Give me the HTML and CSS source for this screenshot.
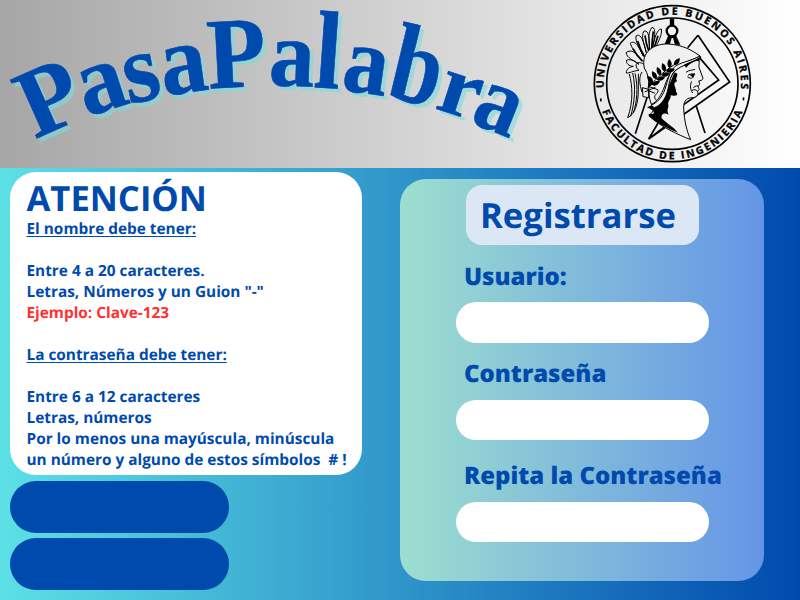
FILE: index.html
```html
<!DOCTYPE html>
<html lang="es">
<head>
<meta charset="utf-8">
<title>PasaPalabra</title>
<link rel="stylesheet" href="styles.css">
</head>
<body>
<header class="header">
  <svg class="title" viewBox="0 0 540 168" role="img" aria-label="PasaPalabra">
    <defs>
      <g id="word">
        <text transform="translate(62 127) rotate(-24)">P</text>
        <text transform="translate(109 110) rotate(-18) scale(.97 1)">a</text>
        <text transform="translate(146.500 100.500) rotate(-12) scale(.95 1)">s</text>
        <text transform="translate(187 92.500) rotate(-8) scale(.96 1.01)">a</text>
        <text transform="translate(238 87) rotate(-3) scale(.98 1.03)">P</text>
        <text transform="translate(291 86) rotate(2) scale(.93 .97)">a</text>
        <text transform="translate(326 88) rotate(4) scale(.96 1.130)">l</text>
        <text transform="translate(362.500 93) rotate(8) scale(.92 .98)">a</text>
        <text transform="translate(409.500 102) rotate(13.500) scale(.93 1.130)">b</text>
        <text transform="translate(453.500 114.500) rotate(18) scale(.95 .88)">r</text>
        <text transform="translate(489.500 130) rotate(22) scale(.91 .97)">a</text>
      </g>
    </defs>
    <use class="title-shadow" href="#word" x="4" y="4"/>
    <use class="title-face" href="#word"/>
  </svg>
  <svg class="seal" viewBox="21 9 480 480">
    <defs>
      <path id="arc-top" d="M56.500 265A206 206 0 1 1 467.500 265"/>
      <path id="arc-bottom" d="M51 333A226 226 0 0 0 473 333"/>
      <path id="leaf" d="M0 0C-9 -6 -9 -17 -3 -27C7 -19 9 -8 0 0Z"/>
    </defs>
    <g class="line">
      <circle cx="262" cy="251" r="234" stroke-width="5"/>
      <circle cx="262" cy="251" r="197" stroke-width="5"/>
      <path stroke-width="5" d="M339 106L434 246L191 417L221 366M339 106L308 143M341 170L401 240L296 314M191 417L247 374"/>
      <path stroke-width="5" d="M186 293L151 401M334 319L360 399"/>
      <circle cx="261" cy="93" r="16" stroke-width="7"/>
      <path stroke-width="13" d="M261 56V77"/>
    </g>
    <path d="M250 106L238 134H254L260 114H264L270 134H286L273 106Z"/>
    <g class="plume">
      <path d="M177 193C150 177 148 202 162 211C142 213 134 220 124 219C123 207 134 201 145 199C132 199 122 190 125 180C140 177 152 184 162 193C142 178 127 175 123 158C139 145 154 160 169 178C150 160 140 143 136 130C150 118 161 140 174 167C161 138 151 126 153 108C168 97 177 127 184 158C174 122 169 111 176 94C192 87 193 116 194 151C190 112 190 97 201 82C216 83 207 117 202 148C209 111 216 88 229 87C233 101 219 128 210 144"/>
      <path d="M133 222C142 256 146 304 128 353C151 343 160 306 160 271V221M143 219C153 262 149 308 137 349M150 220C160 265 156 304 145 339M171 216C160 234 164 253 171 276"/>
      <path stroke-width="5" d="M144 146C151 160 160 172 173 184M158 123C164 144 172 159 179 171M180 106C182 128 188 145 193 158M205 94C202 118 199 137 201 151M219 107L207 145"/>
    </g>
    <path class="skin" d="M178 204C167 156 207 130 250 132C291 134 322 151 345 168C330 177 309 184 287 194C259 207 248 231 239 258C229 285 217 306 199 313C183 274 202 241 178 204Z"/>
    <path class="skin" d="M297 192C306 184 322 178 338 174C346 181 341 191 342 202L354 235C353 241 346 242 341 243C345 251 345 257 338 259C345 267 342 272 337 273C343 283 334 294 320 293C300 295 296 308 296 324C298 367 306 394 317 419C278 404 224 378 193 348L213 321C239 305 239 278 249 251C259 225 272 205 297 192Z"/>
    <path d="M269 218C287 219 267 236 277 243C259 250 274 260 273 275C283 286 271 289 257 286C258 296 252 299 249 311C254 325 242 325 251 344C238 336 227 343 230 355C241 367 264 380 279 398C239 382 216 367 193 350C187 343 193 339 201 342C210 343 211 332 186 322C200 315 218 315 238 292L252 255C259 240 264 226 269 218Z"/>
    <path class="skin" d="M345 168C318 184 280 187 265 204C247 226 246 263 231 287C222 302 210 311 198 316L208 323C226 317 239 300 246 278C253 254 253 230 270 212C290 195 326 188 347 172Z"/>
    <path d="M297 194C316 185 333 181 349 169L341 184L336 182C325 184 314 190 303 203Z"/>
    <g>
      <use href="#leaf" transform="translate(203 250) rotate(-30)"/>
      <use href="#leaf" transform="translate(214 238) rotate(-22)"/>
      <use href="#leaf" transform="translate(226 226) rotate(-15)"/>
      <use href="#leaf" transform="translate(239 215) rotate(-8)"/>
      <use href="#leaf" transform="translate(254 204) rotate(2)"/>
      <use href="#leaf" transform="translate(267 195) rotate(45)"/>
      <use href="#leaf" transform="translate(200 254) rotate(75)"/>
      <use href="#leaf" transform="translate(215 239) rotate(78)"/>
      <use href="#leaf" transform="translate(229 226) rotate(82)"/>
      <use href="#leaf" transform="translate(243 213) rotate(86)"/>
      <path class="plume" d="M191 263C207 242 233 216 268 194"/>
      <path d="M187 266L193 239L205 250Z"/>
    </g>
    <g class="plume">
      <path d="M172 263L191 268V293L174 290ZM193 260L218 269C225 281 198 284 214 301M188 271L210 280M179 276L211 262"/>
      <path d="M328 222C324 233 322 240 307 230M325 263C332 257 337 257 340 258M321 271C328 267 334 270 336 273M320 244C315 254 315 268 323 279"/>
      <path d="M303 217C313 209 320 212 330 208M309 226C317 219 323 223 330 222"/>
    </g>
    <path d="M313 224L330 220L325 233Z"/>
    <text class="seal-text"><textPath href="#arc-top" startOffset="1" textLength="676">UNIVERSIDAD DE BUENOS AIRES</textPath></text>
    <text class="seal-text"><textPath href="#arc-bottom" startOffset="1" textLength="540">FACULTAD DE INGENIERIA</textPath></text>
    <path class="line" stroke-width="5" d="M47 295L48 304M476 292L475 301"/>
  </svg>
</header>
<main class="main">
  <section class="left">
    <article class="rules">
      <h1>ATENCIÓN</h1>
      <p><u>El nombre debe tener:</u></p>
      <p class="gap">Entre 4 a 20 caracteres.</p>
      <p>Letras, Números y un Guion "-"</p>
      <p class="example">Ejemplo: Clave-123</p>
      <p class="gap"><u>La contraseña debe tener:</u></p>
      <p class="gap">Entre 6 a 12 caracteres</p>
      <p>Letras, números</p>
      <p>Por lo menos una mayúscula, minúscula</p>
      <p>un número y alguno de estos símbolos&nbsp; # !</p>
    </article>
    <div class="pill"></div>
    <div class="pill"></div>
  </section>
  <form class="register">
    <h2>Registrarse</h2>
    <label for="user">Usuario:</label>
    <input id="user" type="text">
    <label for="pass">Contraseña</label>
    <input id="pass" type="password">
    <label class="last" for="again">Repita la Contraseña</label>
    <input id="again" type="password">
  </form>
</main>
</body>
</html>
```
FILE: styles.css
```css
* { box-sizing: border-box; margin: 0; }
body {
  width: 800px;
  height: 600px;
  overflow: hidden;
  font-family: "Open Sans", sans-serif;
  font-weight: 700;
  text-rendering: geometricPrecision;
  color: #004aad;
  background: linear-gradient(90deg, #5de0e6, #004aad);
}
.header {
  display: flex;
  justify-content: space-between;
  height: 168px;
  padding-right: 48px;
  background: linear-gradient(90deg, #a6a6a6, #fff);
}
.title {
  width: 540px;
  height: 168px;
  font: 700 98px "Liberation Serif", serif;
  text-anchor: middle;
}
.title-face { fill: #004aad; stroke: #004aad; stroke-width: 0.6px; }
.title-shadow { fill: #7cdcde; opacity: 0.6; }
.seal { width: 160px; height: 160px; margin-top: 3px; }
.line { fill: none; stroke: #000; }
.plume { fill: none; stroke: #000; stroke-width: 3; stroke-linejoin: round; }
.skin { fill: #f0f0f0; stroke: #000; stroke-width: 3; }
.seal-text { font: 700 31px "Open Sans", sans-serif; stroke: #000; stroke-width: 1; }
.main { display: flex; justify-content: space-between; height: 432px; padding: 4.4px 35.6px 0 10px; }
.left { width: 351.700px; }
.rules {
  height: 302.800px;
  padding: 5.600px 0 0 16.500px;
  margin-bottom: 5.800px;
  border-radius: 26px;
  background: #fff;
  font-size: 15.360px;
  line-height: 21px;
  white-space: nowrap;
}
.rules h1 { height: 40px; font-size: 34.600px; line-height: 41px; }
.rules u { text-underline-offset: 2px; text-decoration-thickness: 1px; }
.rules .gap { margin-top: 21px; }
.example { color: #ff3131; }
.pill { width: 219.300px; height: 51.700px; margin-bottom: 5.400px; border-radius: 26px; background: #004aad; }
.register {
  display: flex;
  flex-direction: column;
  align-items: flex-start;
  width: 364.500px;
  height: 402px;
  margin-top: 6.600px;
  padding: 5.700px 0 0 56px;
  border-radius: 26px;
  background: linear-gradient(90deg, #9cdfcf, #6495e6);
}
.register h2 {
  width: 233px;
  height: 60.700px;
  margin-left: 10px;
  padding-left: 14px;
  border-radius: 16px;
  background: #dce7f5;
  font-size: 34.700px;
  line-height: 61.500px;
}
.register label { height: 30px; margin: 15.600px 0 0 8px; font-size: 24px; font-weight: 800; line-height: 31px; white-space: nowrap; }
.register .last { margin-top: 20.500px; line-height: 29.500px; }
.register input {
  width: 253px;
  height: 40.500px;
  margin-top: 11.300px;
  border: 0;
  border-radius: 20.300px;
  background: #fff;
}
```
